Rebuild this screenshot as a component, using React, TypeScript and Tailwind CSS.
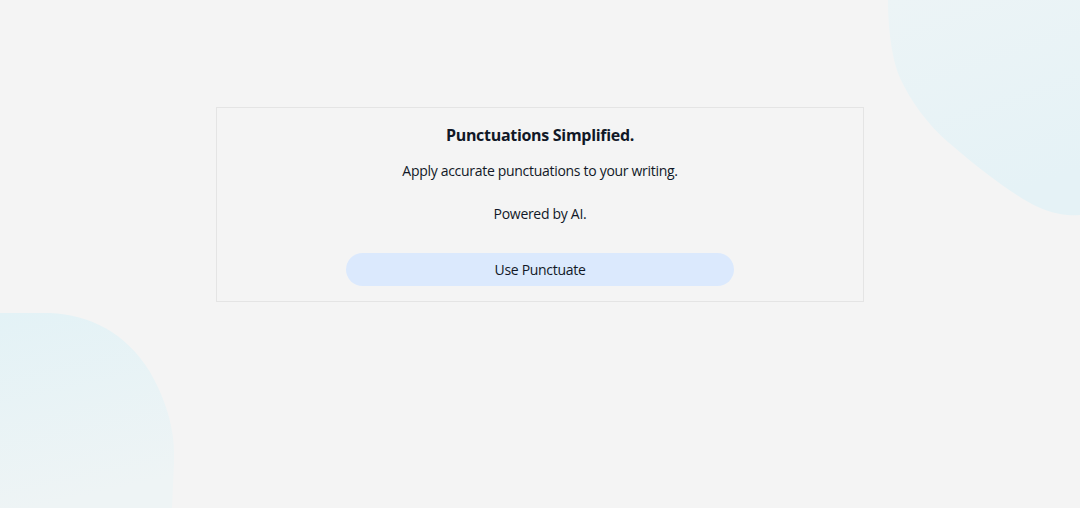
import React from "react";

export default function App() {
  return (
    <div
      className="relative w-[1080px] h-[508px] overflow-hidden bg-[#f4f4f4] text-[#111827]"
      style={{ fontFamily: '"Open Sans", "Noto Sans", sans-serif' }}
    >
      <svg className="absolute right-0 top-0" width="192" height="216" viewBox="0 0 192 216">
        <defs>
          <linearGradient id="g1" x1="0" y1="0" x2="0.3" y2="1">
            <stop offset="0" stopColor="#ecf4f6" />
            <stop offset="1" stopColor="#e5f2f6" />
          </linearGradient>
        </defs>
        <path
          d="M0 0 C 0 30, 4 60, 12 78 C 22 100, 40 125, 60 142 C 90 168, 125 195, 150 207 C 165 214, 180 216, 192 215 L 192 0 Z"
          fill="url(#g1)"
        />
      </svg>
      <svg className="absolute left-0 bottom-0" width="180" height="196" viewBox="0 0 180 196">
        <defs>
          <linearGradient id="g2" x1="0" y1="0" x2="0.2" y2="1">
            <stop offset="0" stopColor="#e3f2f6" />
            <stop offset="1" stopColor="#eef4f5" />
          </linearGradient>
        </defs>
        <path
          d="M0 1 L 50 1 C 90 3, 125 20, 150 60 C 168 92, 175 120, 174 150 L 172 196 L 0 196 Z"
          fill="url(#g2)"
        />
      </svg>

      <div className="relative mx-auto mt-[107px] w-[648px] border border-[#e4e4e4] pt-[15px] pb-[15px] flex flex-col items-center tracking-[-0.3px]">
        <h1 className="text-[16px] leading-6 font-bold">Punctuations Simplified.</h1>
        <p className="mt-[14px] text-[14px] leading-5 font-medium">Apply accurate punctuations to your writing.</p>
        <p className="mt-[23px] text-[14px] leading-5 font-medium">Powered by AI.</p>
        <button className="mt-[29px] w-[388px] h-[33px] rounded-full bg-[#dbe9fd] text-[14px] font-medium">
          Use Punctuate
        </button>
      </div>
    </div>
  );
}
